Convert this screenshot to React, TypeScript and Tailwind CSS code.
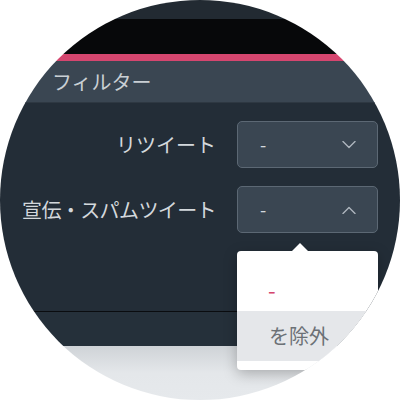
import React from 'react';

const font = { fontFamily: '"Noto Sans CJK JP", "Noto Sans", sans-serif' };

/** Small chevron used in the select boxes. */
const Chevron: React.FC<{ up?: boolean }> = ({ up }) => (
  <svg width="14" height="8" viewBox="0 0 14 8" fill="none" className="text-[#aeb6be]">
    <path
      d={up ? 'M1 7.5L7 1.5L13 7.5' : 'M1 0.5L7 6.5L13 0.5'}
      stroke="currentColor"
      strokeWidth="1.4"
      strokeLinecap="round"
      strokeLinejoin="round"
    />
  </svg>
);

/** One label + select row of the filter panel. */
const FilterRow: React.FC<{ label: string; open?: boolean; tight?: boolean }> = ({ label, open, tight }) => (
  <div className="flex items-center h-[47px]">
    <div
      className={`w-[217px] text-right text-[20px] leading-none text-[#d3d8dc] pr-[1px] whitespace-nowrap ${
        tight ? 'tracking-[-0.6px]' : ''
      }`}
    >
      {label}
    </div>
    <div className="ml-[20px] w-[141px] h-[47px] flex items-center justify-between pl-[22px] pr-[21px] rounded-[5px] border border-[#5c6874] bg-[#3a4652] text-[#d3d8dc] text-[18px]">
      <span>-</span>
      <Chevron up={open} />
    </div>
  </div>
);

export default function App() {
  return (
    <div className="w-[400px] h-[400px] bg-white" style={font}>
      <div className="relative w-[400px] h-[400px] rounded-full overflow-hidden flex flex-col">
        <div className="h-[19px] bg-[#222a32]" />
        <div className="h-[35px] bg-[#07080a]" />
        <div className="h-[7px] bg-[#d5466f]" />
        <div className="h-[42px] bg-[#3a4652] flex items-center pl-[52px] text-[20px] text-[#c9cfd4] border-b border-[#2e3842]">
          フィルター
        </div>
        <div className="h-[208px] bg-[#232d37] pt-[18px] flex flex-col gap-[18px]">
          <FilterRow label="リツイート" />
          <FilterRow label="宣伝・スパムツイート" open tight />
        </div>
        <div className="h-[1px] bg-[#0a0c0f]" />
        <div className="h-[34px] bg-[#25303a]" />
        <div className="flex-1 bg-gradient-to-b from-[#cfd3d7] via-[#e4e7ea] to-[#e6e9ec]" />

        {/* open dropdown menu */}
        <div className="absolute left-[237px] top-[251px] w-[141px] h-[119px] bg-white rounded-[4px] shadow-[0_4px_14px_rgba(0,0,0,0.25)] flex flex-col">
          <div className="absolute -top-[8px] left-[55px] w-0 h-0 border-l-[8px] border-r-[8px] border-b-[8px] border-l-transparent border-r-transparent border-b-white" />
          <div className="h-[60px] flex items-center pl-[31px] pt-[16px] text-[#d5466f] text-[22px] leading-none">-</div>
          <div className="h-[50px] bg-[#e5e7ea] flex items-center pl-[32px] text-[20px] text-[#6c7176]">を除外</div>
        </div>
      </div>
    </div>
  );
}
